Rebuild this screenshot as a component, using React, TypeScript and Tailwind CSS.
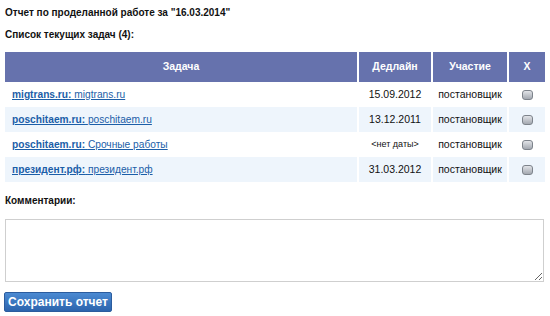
import React from 'react'

const tasks = [
  { site: 'migtrans.ru:', name: 'migtrans.ru', deadline: '15.09.2012', role: 'постановщик' },
  { site: 'poschitaem.ru:', name: 'poschitaem.ru', deadline: '13.12.2011', role: 'постановщик' },
  { site: 'poschitaem.ru:', name: 'Срочные работы', deadline: '<нет даты>', role: 'постановщик' },
  { site: 'президент.рф:', name: 'президент.рф', deadline: '31.03.2012', role: 'постановщик' },
]

function Check() {
  return (
    <span className="inline-block w-[11px] h-[10px] rounded-[3px] border border-[#7d838b] bg-gradient-to-b from-[#e2e4e8] to-[#a3a8b0] align-middle" />
  )
}

export default function App() {
  return (
    <div className="w-[550px] h-[316px] bg-white text-[#111] font-['Liberation_Sans',Arial,sans-serif] text-[10.5px]">
      <div className="pl-[5px] pt-[6px] font-bold text-[10px] leading-[13px]">
        Отчет по проделанной работе за "16.03.2014"
      </div>
      <div className="pl-[5px] pt-[9px] font-bold text-[10px] leading-[13px]">Список текущих задач (4):</div>

      <table className="ml-[3px] mt-[11px] w-[544px] border-separate border-spacing-x-[2px] border-spacing-y-0 table-fixed">
        <colgroup>
          <col className="w-[352px]" />
          <col className="w-[72px]" />
          <col className="w-[74px]" />
          <col className="w-[36px]" />
        </colgroup>
        <thead>
          <tr className="bg-[#6672ad] text-white text-[10.5px]">
            <th className="h-[30px] p-0 font-bold">Задача</th>
            <th className="h-[30px] p-0 font-bold">Дедлайн</th>
            <th className="h-[30px] p-0 font-bold">Участие</th>
            <th className="h-[30px] p-0 font-bold">X</th>
          </tr>
        </thead>
        <tbody>
          {tasks.map((t, i) => (
            <tr key={i} className={i % 2 === 1 ? 'bg-[#eef5fc]' : ''}>
              <td className="h-[25px] p-0 pl-[7px] text-[10.2px] text-[#1b5ea8] underline">
                <a className="font-bold">{t.site}</a> {t.name}
              </td>
              <td className={t.deadline.startsWith('<') ? 'h-[25px] p-0 text-center text-[9px]' : 'h-[25px] p-0 text-center'}>
                {t.deadline}
              </td>
              <td className="h-[25px] p-0 text-center">{t.role}</td>
              <td className="h-[25px] p-0 text-center">
                <Check />
              </td>
            </tr>
          ))}
        </tbody>
      </table>

      <div className="pl-[5px] pt-[12px] font-bold text-[10px] leading-[13px]">Комментарии:</div>
      <textarea className="block ml-[5px] mt-[12px] w-[539px] h-[63px] border border-[#cfcfcf] bg-white" />

      <button className="block ml-[4px] mt-[10px] w-[108px] h-[20px] p-0 whitespace-nowrap rounded-[2px] border border-[#2b5c9e] bg-gradient-to-b from-[#4b8ad2] to-[#2c64ad] text-white font-bold text-[12px] leading-[18px]">
        Сохранить отчет
      </button>
    </div>
  )
}
